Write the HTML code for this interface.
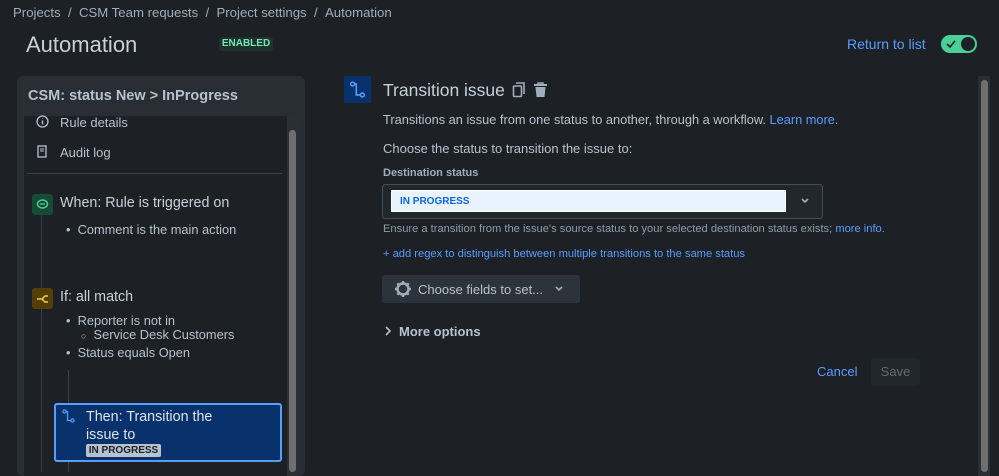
<!DOCTYPE html>
<html><head><meta charset="utf-8"><style>
*{box-sizing:border-box;margin:0;padding:0}
body{width:999px;height:472px;overflow:hidden;background:#1d2125;font-family:"Liberation Sans",sans-serif;color:#b6c2cf;position:relative}
.a{position:absolute;white-space:nowrap}
.link{color:#579dff}
</style></head><body>
<div class="a" style="left:13px;top:5px;font-size:13.2px;color:#9fadbc">Projects &nbsp;/ &nbsp;CSM Team requests &nbsp;/ &nbsp;Project settings &nbsp;/ &nbsp;Automation</div>
<div class="a" style="left:26px;top:32px;font-size:22px;color:#c7d1db">Automation</div>
<div class="a" style="left:219px;top:37px;width:54px;height:14px;background:#1c3329;border-radius:3px;color:#7ee2b8;font-size:10px;font-weight:bold;line-height:14px;text-align:center">ENABLED</div>
<div class="a link" style="left:847px;top:36px;font-size:14px">Return to list</div>
<div class="a" style="left:941px;top:35px;width:36px;height:18px;background:#4bce97;border-radius:9px">
<div style="position:absolute;right:2px;top:2px;width:14px;height:14px;border-radius:50%;background:#1d2125"></div>
<svg style="position:absolute;left:5px;top:4px" width="10" height="10" viewBox="0 0 10 10"><path d="M1 5l3 3 5-6" stroke="#1d2125" stroke-width="1.6" fill="none"/></svg></div>

<div class="a" style="left:17px;top:76px;width:288px;height:400px;background:#282e33;border-radius:6px"></div>
<div class="a" style="left:28px;top:88px;font-size:14.5px;font-weight:bold;color:#b6c2cf">CSM: status New &gt; InProgress</div>
<div class="a" style="left:24px;top:116px;width:274px;height:360px;background:#1d2125"></div>
<div class="a" style="left:287px;top:116px;width:11px;height:360px;background:#2a2f33"></div>
<div class="a" style="left:289px;top:130px;width:7px;height:342px;background:#6f6f6f;border-radius:4px"></div>
<svg class="a" style="left:36px;top:115px" width="13" height="13" viewBox="0 0 13 13"><circle cx="6.5" cy="6.5" r="5.5" stroke="#b6c2cf" stroke-width="1.3" fill="none"/><path d="M6.5 5.5v4M6.5 3.5v.5" stroke="#b6c2cf" stroke-width="1.4"/></svg>
<div class="a" style="left:60px;top:115px;font-size:13px">Rule details</div>
<svg class="a" style="left:37px;top:145px" width="10" height="13" viewBox="0 0 10 13"><rect x="1" y="1" width="8" height="11" stroke="#b6c2cf" stroke-width="1.3" fill="none"/><path d="M3 4h4M3 6h4" stroke="#b6c2cf"/></svg>
<div class="a" style="left:60px;top:145px;font-size:13px">Audit log</div>
<div class="a" style="left:27px;top:173px;width:255px;height:1px;background:#38414a"></div>
<div class="a" style="left:41px;top:214px;width:1px;height:258px;background:#38414a"></div>
<div class="a" style="left:32px;top:194px;width:21px;height:21px;background:#164b35;border-radius:3px"></div>
<svg class="a" style="left:36px;top:198px" width="13" height="13" viewBox="0 0 13 13"><ellipse cx="6.5" cy="6" rx="5" ry="4" stroke="#4bce97" stroke-width="1.4" fill="none"/><path d="M4 6h5" stroke="#4bce97" stroke-width="1.3"/></svg>
<div class="a" style="left:60px;top:195px;font-size:14.3px;color:#c7d1db">When: Rule is triggered on</div>
<div class="a" style="left:66px;top:222px;font-size:12.8px">•&nbsp; Comment is the main action</div>
<div class="a" style="left:32px;top:288px;width:21px;height:21px;background:#533f04;border-radius:3px"></div>
<svg class="a" style="left:36px;top:292px" width="13" height="13" viewBox="0 0 13 13"><path d="M1 7h5M6 7l3-3h3M6 7l3 3h3" stroke="#f5cd47" stroke-width="1.5" fill="none"/></svg>
<div class="a" style="left:60px;top:289px;font-size:14.3px;color:#c7d1db">If: all match</div>
<div class="a" style="left:66px;top:313px;font-size:12.8px">•&nbsp; Reporter is not in</div>
<div class="a" style="left:81px;top:327px;font-size:12.8px"><span style="font-size:9px">○</span>&nbsp; Service Desk Customers</div>
<div class="a" style="left:66px;top:345px;font-size:12.8px">•&nbsp; Status equals Open</div>
<div class="a" style="left:68px;top:370px;width:1px;height:102px;background:#38414a"></div>
<div class="a" style="left:54px;top:403px;width:228px;height:59px;background:#09326c;border:2px solid #579dff;border-radius:3px"></div>
<svg class="a" style="left:62px;top:409px" width="13" height="14" viewBox="0 0 13 14"><circle cx="2.5" cy="2.5" r="1.6" stroke="#579dff" stroke-width="1.2" fill="none"/><circle cx="10.5" cy="11.5" r="1.6" stroke="#579dff" stroke-width="1.2" fill="none"/><path d="M4 2.5h1.5v9H9" stroke="#579dff" stroke-width="1.3" fill="none"/></svg>
<div class="a" style="left:86px;top:408px;font-size:14.3px;color:#dee4ea;line-height:18px">Then: Transition the<br>issue to</div>
<div class="a" style="left:86px;top:444px;width:75px;height:13px;background:#b6c2cf;border-radius:2px;color:#1d2125;font-size:10px;font-weight:bold;line-height:13px;text-align:center">IN PROGRESS</div>

<div class="a" style="left:344px;top:76px;width:27px;height:27px;background:#09326c;border-radius:2px"></div>
<svg class="a" style="left:349px;top:81px" width="17" height="17" viewBox="0 0 13 14"><circle cx="2.5" cy="2.5" r="1.6" stroke="#579dff" stroke-width="1.2" fill="none"/><circle cx="10.5" cy="11.5" r="1.6" stroke="#579dff" stroke-width="1.2" fill="none"/><path d="M4 2.5h1.5v9H9" stroke="#579dff" stroke-width="1.3" fill="none"/></svg>
<div class="a" style="left:383px;top:80px;font-size:17.5px;color:#c7d1db">Transition issue</div>
<svg class="a" style="left:512px;top:82px" width="14" height="16" viewBox="0 0 14 16"><path d="M4 1h8v11" stroke="#9fadbc" stroke-width="1.6" fill="none"/><rect x="1.5" y="4" width="8" height="10.5" rx="1" stroke="#9fadbc" stroke-width="1.6" fill="none"/></svg>
<svg class="a" style="left:533px;top:82px" width="15" height="16" viewBox="0 0 15 16"><path d="M1 3h13" stroke="#9fadbc" stroke-width="2"/><path d="M5 2V1h5v1" stroke="#9fadbc" stroke-width="1.5" fill="none"/><path d="M2.5 5h10l-1 10h-8z" fill="#9fadbc"/></svg>
<div class="a" style="left:383px;top:112px;font-size:12.8px">Transitions an issue from one status to another, through a workflow. <span class="link">Learn more.</span></div>
<div class="a" style="left:383px;top:141px;font-size:13px">Choose the status to transition the issue to:</div>
<div class="a" style="left:383px;top:167px;font-size:11px;font-weight:bold;color:#9fadbc">Destination status</div>
<div class="a" style="left:382px;top:184px;width:441px;height:35px;background:#22272b;border:1px solid #454f59;border-radius:3px"></div>
<div class="a" style="left:391px;top:190px;width:395px;height:22px;background:#e9f2ff;border:1px solid #fff"></div>
<div class="a" style="left:400px;top:196px;font-size:10px;font-weight:bold;color:#0c66e4">IN PROGRESS</div>
<svg class="a" style="left:800px;top:197px" width="10" height="8" viewBox="0 0 10 8"><path d="M2 2l3 3 3-3" stroke="#9fadbc" stroke-width="1.6" fill="none"/></svg>
<div class="a" style="left:383px;top:223px;font-size:11.15px;color:#8c9bab">Ensure a transition from the issue's source status to your selected destination status exists; <span class="link">more info</span>.</div>
<div class="a link" style="left:383px;top:248px;font-size:11.15px">+ add regex to distinguish between multiple transitions to the same status</div>
<div class="a" style="left:382px;top:275px;width:198px;height:28px;background:#2c333a;border-radius:3px"></div>
<svg class="a" style="left:394px;top:280px" width="18" height="18" viewBox="0 0 18 18"><circle cx="9" cy="9" r="5.5" stroke="#9fadbc" stroke-width="2.5" fill="none"/><g stroke="#9fadbc" stroke-width="2.4"><path d="M9 1v3M9 14v3M1 9h3M14 9h3M3.3 3.3l2 2M12.7 12.7l2 2M3.3 14.7l2-2M12.7 5.3l2-2"/></g></svg>
<div class="a" style="left:418px;top:282px;font-size:13px;color:#b6c2cf">Choose fields to set...</div>
<svg class="a" style="left:554px;top:285px" width="10" height="8" viewBox="0 0 10 8"><path d="M2 2l3 3 3-3" stroke="#9fadbc" stroke-width="1.6" fill="none"/></svg>
<svg class="a" style="left:384px;top:326px" width="8" height="10" viewBox="0 0 8 10"><path d="M2 1l4 4-4 4" stroke="#b6c2cf" stroke-width="1.6" fill="none"/></svg>
<div class="a" style="left:399px;top:324px;font-size:13px;font-weight:bold">More options</div>
<div class="a link" style="left:817px;top:364px;font-size:13px">Cancel</div>
<div class="a" style="left:871px;top:358px;width:49px;height:28px;background:#22272b;border-radius:3px;color:#5f6b76;font-size:13px;line-height:28px;text-align:center">Save</div>
<div class="a" style="left:978px;top:76px;width:12px;height:400px;background:#2a2f33"></div>
<div class="a" style="left:981px;top:80px;width:7px;height:392px;background:#6f6f6f;border-radius:4px"></div>
</body></html>
